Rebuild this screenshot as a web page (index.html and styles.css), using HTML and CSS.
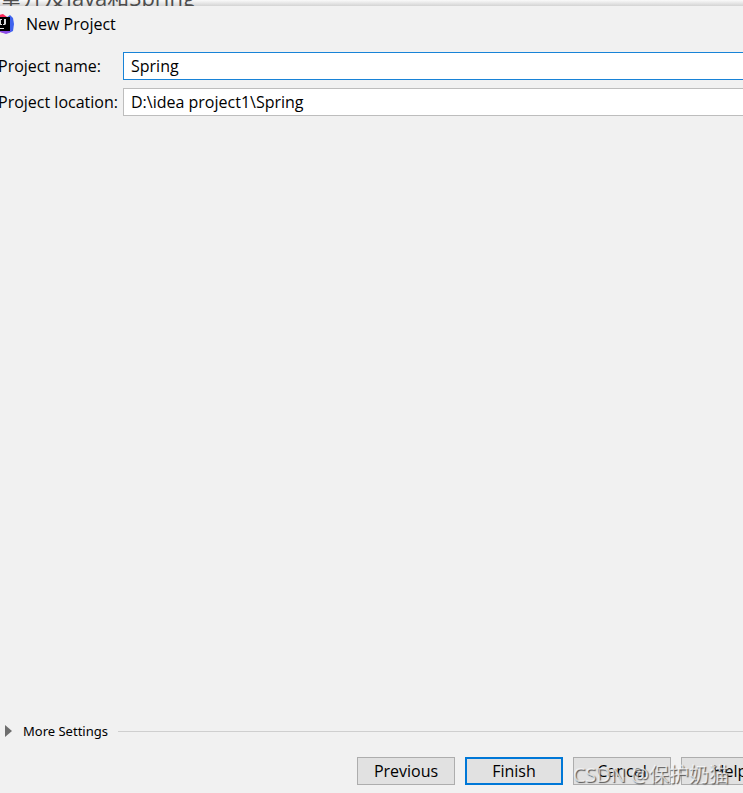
FILE: index.html
```
<!DOCTYPE html>
<html lang="en">
<head>
    <meta charset="UTF-8">
    <meta name="viewport" content="width=device-width, initial-scale=1.0">
    <title>New Project</title>
    <link rel="stylesheet" href="styles.css">
</head>
<body>
    <div class="page-behind"><p>重开及Java和Spring</p></div>
    <form class="dialog">
        <header class="titlebar">
            <svg class="logo" width="20" height="20" viewBox="0 0 20 20">
                <path d="M2 2l7-2 4 3 1 4-3 12-9-2z" fill="#fb2a5b"/>
                <path d="M12 4l4-3 3 3 1 6-1 7-4 2-5-2z" fill="#3f63ee"/>
                <path d="M4 16h13l-2 3-3 1-6-2z" fill="#8a4be6"/>
                <path d="M3 3h13v14H3z" fill="#000"/>
                <path d="M5 5h3v1H7v4h1v1H5v-1h1V6H5zM10 5h2v5l-1 1H9v-1h1zM5 14h5v1H5z" fill="#ddd"/>
            </svg>
            <h1>New Project</h1>
        </header>
        <div class="fields">
            <label for="name">Project name:</label>
            <input id="name" class="active" type="text" value="Spring">
            <label for="location">Project location:</label>
            <input id="location" type="text" value="D:\idea project1\Spring">
        </div>
        <button class="more" type="button">
            <svg width="8" height="12" viewBox="0 0 8 12"><path d="M0 0l7 6-7 6z" fill="#6e6e6e"/></svg>
            <span>More Settings</span>
        </button>
        <footer class="actions">
            <button type="button">Previous</button>
            <button class="default" type="button">Finish</button>
            <button type="button">Cancel</button>
            <button type="button">Help</button>
        </footer>
    </form>
    <div class="watermark">CSDN @保护奶猫</div>
</body>
</html>
```

FILE: styles.css
```
* {
    box-sizing: border-box;
}
body {
    margin: 0;
    height: 100vh;
    display: flex;
    flex-direction: column;
    overflow: hidden;
    background-color: #f1f1f1;
    color: #000;
    font-family: "Open Sans", "Noto Sans CJK SC", sans-serif;
    font-size: 16px;
}
button, input {
    font: inherit;
    color: inherit;
}
.page-behind {
    height: 6px;
    flex: none;
    display: flex;
    align-items: flex-end;
    overflow: hidden;
    background: linear-gradient(#fafafa, #d4d4d4);
}
.page-behind p {
    margin: 0;
    color: #4d4d4d;
    font-size: 22px;
    line-height: 18px;
}
.dialog {
    flex: 1;
    display: flex;
    flex-direction: column;
    margin-left: -4px;
    background-color: #f1f1f1;
}
.titlebar {
    display: flex;
    align-items: center;
    gap: 12px;
    height: 36px;
    margin-left: -2px;
}
.titlebar h1 {
    margin: 0;
    font-size: 16px;
    font-weight: normal;
}
.fields {
    display: grid;
    grid-template-columns: 125px 1fr;
    align-items: center;
    row-gap: 8px;
    margin: 10px -8px 0 2px;
}
.fields input {
    width: 100%;
    height: 28px;
    padding: 0 7px 1px;
    border: 1px solid #bdbdbd;
    background-color: #fff;
    outline: none;
}
.fields label {
    padding-bottom: 1px;
}
.fields input.active {
    border-color: #1883d7;
}
.more {
    display: flex;
    align-items: center;
    margin: auto 0 0 9px;
    padding: 0;
    border: none;
    background: none;
    font-family: "Noto Sans", sans-serif;
    font-size: 13px;
    line-height: 20px;
}
.more span {
    margin: 0 10px;
}
.more::after {
    content: "";
    flex: 1;
    height: 1px;
    background-color: #cfcfcf;
}
.actions {
    display: flex;
    justify-content: flex-end;
    gap: 10px;
    margin: 16px -36px 8px 0;
}
.actions button {
    width: 98px;
    height: 28px;
    padding: 0 0 1px;
    border: 1px solid #adadad;
    background-color: #e1e1e1;
    line-height: 22px;
}
.actions .default {
    border: 2px solid #0078d7;
}
.watermark {
    position: absolute;
    right: 14px;
    bottom: 4px;
    color: rgba(255, 255, 255, 0.7);
    font-size: 20px;
    line-height: 28px;
    text-shadow: 1px 1px 1px #555;
    pointer-events: none;
}
```
